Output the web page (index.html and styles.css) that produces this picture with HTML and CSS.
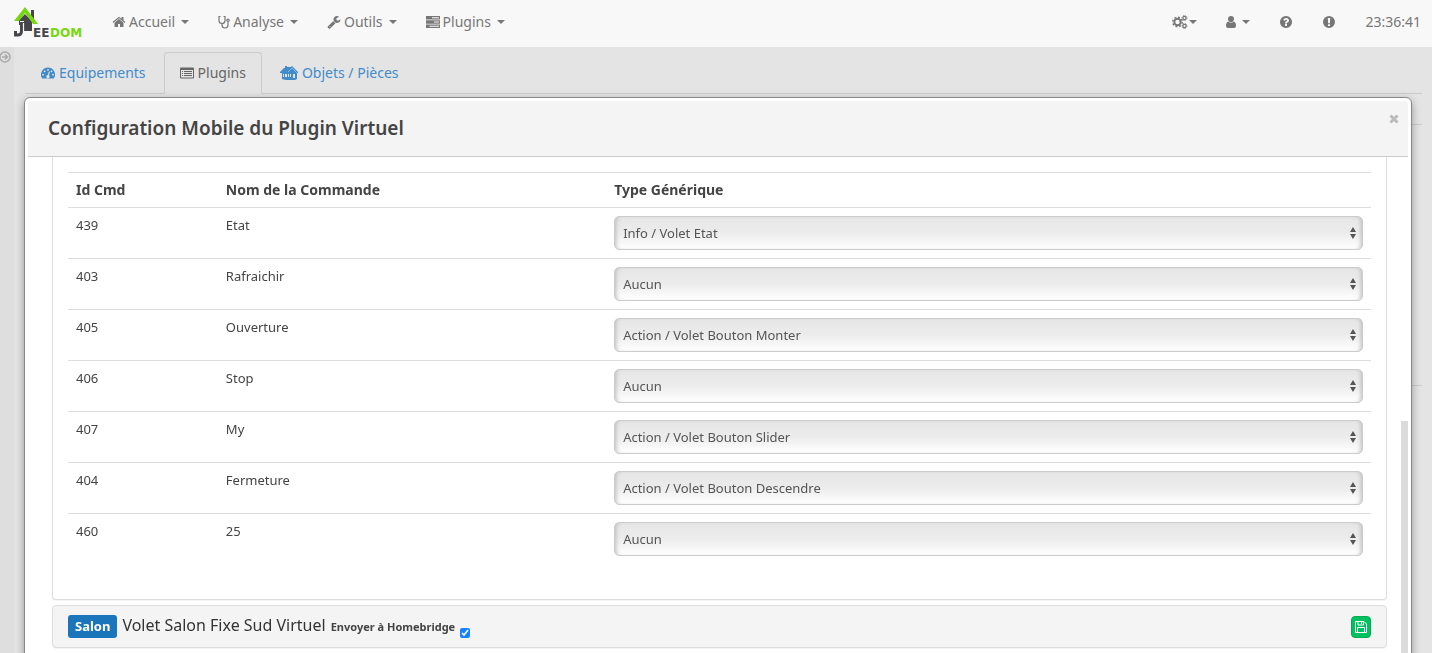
FILE: index.html
```html
<!DOCTYPE html>
<html lang="fr">
<head>
<meta charset="utf-8">
<title>Jeedom</title>
<link rel="stylesheet" href="styles.css">
</head>
<body>
<svg class="defs" aria-hidden="true">
  <symbol id="caret" viewBox="0 0 8 4"><path d="M0 0h8L4 4z"/></symbol>
  <symbol id="updown" viewBox="0 0 6 12"><path d="M0 5l3-5 3 5zM0 7h6l-3 5z"/></symbol>
</svg>

<header class="navbar">
  <a class="brand" href="#" aria-label="Jeedom">
    <svg class="logo" viewBox="0 0 70 32" aria-hidden="true">
      <path fill="#45454b" d="M17 4h3v12h-3zM5 14l6-6 7 7v10H9v-6H5z"/>
      <path fill="#77d70f" d="M0 15L11 1l13 17h-5L11 7 5 15z"/>
      <path fill="none" stroke="#45454b" stroke-width="3" d="M7.500 16v9q0 4-4 4H1.500v-4"/>
      <path fill="none" stroke="#f8f8f8" stroke-width="1.200" d="M9.500 17v8M6 15.500h4"/>
      <text class="logo-text" x="19" y="31" fill="#45454b">EE</text>
      <text class="logo-text" x="36" y="31" fill="#77d70f">DOM</text>
    </svg>
  </a>
  <nav class="menu">
    <a href="#"><svg class="icon" viewBox="0 0 1792 1792"><path d="M1472 992v480q0 26-19 45t-45 19h-384v-384h-256v384h-384q-26 0-45-19t-19-45v-480q0-1 .5-3t.5-3l575-474 575 474q1 2 1 6zm223-69l-62 74q-8 9-21 11h-3q-13 0-21-7l-692-577-692 577q-12 8-24 7-13-2-21-11l-62-74q-8-10-7-23.500t11-21.500l719-599q32-26 76-26t76 26l244 204v-195q0-14 9-23t23-9h192q14 0 23 9t9 23v408l219 182q10 8 11 21.500t-7 23.500z"/></svg>Accueil<svg class="caret"><use href="#caret"/></svg></a>
    <a href="#"><svg class="icon narrow line" viewBox="0 0 12 14"><path d="M2.500 1.500H1v4q0 3 3 3t3-3v-4H5.500M4 8.500V10q0 3 3 3t3-3V6.500"/><circle cx="10" cy="5.300" r="1.200"/></svg>Analyse<svg class="caret"><use href="#caret"/></svg></a>
    <a href="#"><svg class="icon" viewBox="0 0 1792 1792"><path d="M448 1472q0-26-19-45t-45-19-45 19-19 45 19 45 45 19 45-19 19-45zm644-420l-682 682q-37 37-90 37-52 0-91-37l-106-108q-38-36-38-90 0-53 38-91l681-681q39 98 114.500 173.500t173.500 114.500zm634-435q0 39-23 106-47 134-164.500 217.500t-258.500 83.500q-185 0-316.500-131.500t-131.500-316.500 131.500-316.500 316.500-131.500q58 0 121.500 16.500t107.500 46.500q16 11 16 28t-16 28l-293 169v224l193 107q5-3 79-48.500t135.500-81 70.500-35.500q15 0 23.500 10t8.500 25z"/></svg>Outils<svg class="caret"><use href="#caret"/></svg></a>
    <a href="#"><svg class="icon" viewBox="0 0 14 14"><path fill-rule="evenodd" d="M0 1h14v3.400H0zM0 5.300h14v3.400H0zM0 9.600h14V13H0zM6 2.200v1h7v-1zM8 6.500v1h5v-1zM3.500 10.800v1H13v-1z"/></svg>Plugins<svg class="caret"><use href="#caret"/></svg></a>
  </nav>
  <nav class="tools">
    <a href="#" aria-label="Réglages"><svg class="icon cogs" viewBox="0 0 16 14"><g fill="none" stroke="currentColor"><circle cx="5.500" cy="7" r="3.200" stroke-width="2"/><circle cx="5.500" cy="7" r="4.800" stroke-width="1.400" stroke-dasharray="1.900 1.870"/><circle cx="12.500" cy="3" r="1.600" stroke-width="1.200"/><circle cx="12.500" cy="3" r="2.500" stroke-dasharray="1 .96"/><circle cx="12.500" cy="11" r="1.600" stroke-width="1.200"/><circle cx="12.500" cy="11" r="2.500" stroke-dasharray="1 .96"/></g></svg><svg class="caret"><use href="#caret"/></svg></a>
    <a href="#" aria-label="Profil"><svg class="icon user" viewBox="0 0 10 12"><path d="M5 0a3 3 0 0 1 3 3c0 1.700-1.300 3.200-3 3.200S2 4.700 2 3a3 3 0 0 1 3-3zM2.300 5.500Q5 8 7.700 5.500 10 6 10 10q0 2-2 2H2q-2 0-2-2 0-4 2.300-4.500z"/></svg><svg class="caret"><use href="#caret"/></svg></a>
    <a href="#" aria-label="Aide"><svg class="icon" viewBox="0 0 1792 1792"><path d="M1024 1376v-192q0-14-9-23t-23-9h-192q-14 0-23 9t-9 23v192q0 14 9 23t23 9h192q14 0 23-9t9-23zm256-672q0-88-55.500-163t-138.500-116-170-41q-243 0-371 213-15 24 8 42l132 100q7 6 19 6 16 0 25-12 53-68 86-92 34-24 86-24 48 0 85.500 26t37.500 59q0 38-20 61t-68 45q-63 28-115.500 86.500t-52.500 125.500v36q0 14 9 23t23 9h192q14 0 23-9t9-23q0-19 21.500-49.500t54.500-49.500q32-18 49-28.500t46-35 44.500-48 28-60.500 12.500-81zm384 192q0 209-103 385.500t-279.500 279.500-385.500 103-385.500-103-279.500-279.500-103-385.500 103-385.500 279.500-279.500 385.500-103 385.500 103 279.500 279.500 103 385.500z"/></svg></a>
    <a href="#" aria-label="Informations"><svg class="icon" viewBox="0 0 14 14"><path fill-rule="evenodd" d="M7 1a6 6 0 1 1 0 12A6 6 0 0 1 7 1zM5.800 3l.3 5.200h1.800L8.200 3zM6 9.200V11h2V9.200z"/></svg></a>
    <span class="clock">23:36:41</span>
  </nav>
</header>

<div class="page">
  <aside class="rail">
    <button class="rail-toggle" aria-label="Ouvrir le menu"><svg viewBox="0 0 12 12"><circle cx="6" cy="6" r="5"/><path d="M3 6h5M6 3.500L8.500 6 6 8.500"/></svg></button>
  </aside>
  <main class="content">
    <nav class="tabs">
      <a href="#"><svg class="icon" viewBox="0 0 14 14"><path fill-rule="evenodd" d="M7 1.500a7 7 0 0 1 5.900 10.800q-.2.200-.5.200H1.600q-.3 0-.5-.2A7 7 0 0 1 7 1.500zM7 3a.9.900 0 1 0 0 1.800A.9.900 0 0 0 7 3zM3.600 4.400a.9.900 0 1 0 0 1.800.9.900 0 0 0 0-1.800zM2 7.800a.9.900 0 1 0 0 1.800.9.900 0 0 0 0-1.800zM12 7.800a.9.900 0 1 0 0 1.800.9.900 0 0 0 0-1.800zM10.500 4.400a.9.900 0 1 0 0 1.800.9.900 0 0 0 0-1.800zM8 5.500L6.800 9A1.600 1.600 0 1 0 7.900 9.300L9 5.800z"/></svg>Equipements</a>
      <a class="active" href="#"><svg class="icon" viewBox="0 0 14 14"><path fill-rule="evenodd" d="M1 1.500h12q1 0 1 1v9q0 1-1 1H1q-1 0-1-1v-9q0-1 1-1zM1 4v7.500h12V4zM2 5h1v1H2zM4 5h8v1H4zM2 7h1v1H2zM4 7h8v1H4zM2 9h1v1H2zM4 9h8v1H4z"/></svg>Plugins</a>
      <a href="#"><svg class="icon house" viewBox="0 0 18 14"><path d="M0 6l4-4h1V0h2v1h4l1-1 6 6v1h-1v6l-2 1H6l-4-1V7H0z"/><path fill="#e4e4e4" d="M3 8h1v3H3zM5 8h2v3H5zM8 8h1v3H8zM10 8h1v3h-1zM13 8h2v4h-2z"/><path fill="none" stroke="#e4e4e4" stroke-width=".5" d="M8 6l4-4 5 5"/></svg>Objets / Pièces</a>
    </nav>
    <div class="section"></div>
    <div class="section tall"></div>
  </main>
</div>

<div class="modal" role="dialog" aria-labelledby="modal-title">
  <div class="modal-head">
    <h1 id="modal-title">Configuration Mobile du Plugin Virtuel</h1>
    <button class="close" aria-label="Fermer"><svg viewBox="0 0 10 10"><path d="M1.500 1.500l7 7M8.500 1.500l-7 7"/></svg></button>
  </div>
  <div class="modal-body">
    <section class="panel open">
      <table>
        <thead><tr><th class="col-id">Id Cmd</th><th class="col-name">Nom de la Commande</th><th>Type Générique</th></tr></thead>
        <tbody>
          <tr><td>439</td><td>Etat</td><td><div class="pick"><select aria-label="Type générique Etat"><option>Info / Volet Etat</option></select><svg><use href="#updown"/></svg></div></td></tr>
          <tr><td>403</td><td>Rafraichir</td><td><div class="pick"><select aria-label="Type générique Rafraichir"><option>Aucun</option></select><svg><use href="#updown"/></svg></div></td></tr>
          <tr><td>405</td><td>Ouverture</td><td><div class="pick"><select aria-label="Type générique Ouverture"><option>Action / Volet Bouton Monter</option></select><svg><use href="#updown"/></svg></div></td></tr>
          <tr><td>406</td><td>Stop</td><td><div class="pick"><select aria-label="Type générique Stop"><option>Aucun</option></select><svg><use href="#updown"/></svg></div></td></tr>
          <tr><td>407</td><td>My</td><td><div class="pick"><select aria-label="Type générique My"><option>Action / Volet Bouton Slider</option></select><svg><use href="#updown"/></svg></div></td></tr>
          <tr><td>404</td><td>Fermeture</td><td><div class="pick"><select aria-label="Type générique Fermeture"><option>Action / Volet Bouton Descendre</option></select><svg><use href="#updown"/></svg></div></td></tr>
          <tr><td>460</td><td>25</td><td><div class="pick"><select aria-label="Type générique 25"><option>Aucun</option></select><svg><use href="#updown"/></svg></div></td></tr>
        </tbody>
      </table>
    </section>
    <section class="panel item">
      <span class="room">Salon</span>
      <a class="item-name" href="#">Volet Salon Fixe Sud Virtuel</a>
      <label class="send" for="send">Envoyer à Homebridge</label>
      <input id="send" type="checkbox" checked>
      <button class="save" aria-label="Sauvegarder"><svg viewBox="0 0 12 12"><path d="M.5.500h8.500l2.500 2.500v8.500H.5zM3 .5v3.500h5.500V.5M6.500 1v2M2.500 11.500v-5h7v5"/></svg></button>
    </section>
  </div>
  <div class="scroll-thumb"></div>
</div>
</body>
</html>
```

FILE: styles.css
```css
* { box-sizing: border-box; }
html, body { height: 100%; }
body {
  margin: 0;
  overflow: hidden;
  display: flex;
  flex-direction: column;
  background: #e4e4e4;
  color: #333;
  font: 14px/20px "Noto Sans", "Open Sans", sans-serif;
}
a { color: inherit; text-decoration: none; }
button { padding: 0; border: 0; background: none; display: block; }
svg { display: block; flex: none; fill: currentColor; }
.defs { position: absolute; width: 0; height: 0; }
.icon { width: 14px; height: 14px; margin-right: 3px; }
.icon.narrow { width: 12px; }
.line { fill: none; stroke: currentColor; stroke-width: 1.2; }
.caret { width: 8px; height: 4px; margin-left: 6px; }

.navbar {
  flex: none;
  display: flex;
  align-items: center;
  justify-content: space-between;
  height: 47px;
  padding: 0 11px 3px 14px;
  background: #f8f8f8;
  color: #777;
}
.logo { width: 70px; height: 32px; overflow: visible; }
.logo-text { font: bold 12px "DejaVu Sans", sans-serif; }
.menu { display: flex; gap: 29px; margin: 0 auto 0 28px; }
.menu a, .tools a { display: flex; align-items: center; }
.tools { display: flex; align-items: center; gap: 29px; }
.tools .icon { margin: 0; }
.tools .cogs { width: 16px; }
.tools .user { width: 10px; height: 12px; }
.tools .cogs + .caret { margin-left: 1px; }

.page { flex: 1; display: flex; min-height: 0; }
.rail { width: 14px; background: #dedede; }
.rail-toggle { margin: 4px 0 0 -1px; color: #aaa; }
.rail-toggle svg { width: 12px; height: 12px; fill: none; stroke: currentColor; stroke-width: 1.5; }
.content { flex: 1; padding: 5px 10px 0 11px; }
.tabs { display: flex; height: 42px; border-bottom: 1px solid #ccc; color: #428bca; }
.tabs a {
  display: flex;
  align-items: center;
  height: 42px;
  padding: 0 15px;
  margin-right: 2px;
  border: 1px solid transparent;
}
.tabs .active {
  color: #666;
  background: #e4e4e4;
  border-color: #ccc #ccc #e4e4e4;
  border-radius: 4px 4px 0 0;
}
.tabs .icon { margin-right: 4px; }
.tabs .house { width: 18px; }
.section { height: 31px; border-bottom: 1px solid #ccc; }
.section.tall { height: 261px; }

.modal {
  position: fixed;
  top: 97px;
  right: 20px;
  bottom: -10px;
  left: 24px;
  display: flex;
  flex-direction: column;
  padding: 3px;
  overflow: hidden;
  background: #fff;
  border: 1px solid #888;
  border-radius: 6px;
  box-shadow: 0 3px 9px rgba(0, 0, 0, .35);
}
.modal-head {
  flex: none;
  display: flex;
  justify-content: space-between;
  align-items: flex-start;
  padding: 13px 9px 14px 20px;
  background: #f4f4f4;
  border-bottom: 1px solid #ccc;
  border-radius: 4px 4px 0 0;
}
.modal-head h1 {
  margin: 0;
  color: #444;
  font-size: 19px;
  line-height: 28px;
  font-weight: 600;
}
.close { color: #bbb; }
.close svg { width: 10px; height: 10px; stroke: currentColor; stroke-width: 3; }
.modal-body { padding: 0 21px 0 24px; font-size: 13px; }
.panel { border: 1px solid #ddd; border-radius: 4px; box-shadow: 0 1px 1px rgba(0, 0, 0, .05); }
.panel.open {
  padding: 15px 15px 35px;
  border-top: 0;
  border-radius: 0 0 4px 4px;
}
table { width: 100%; table-layout: fixed; border-collapse: collapse; color: #444; }
th, td { padding: 8px; text-align: left; vertical-align: top; border-top: 1px solid #ddd; line-height: 18px; }
th { font-size: 14px; font-weight: bold; }
.col-id { width: 11.5%; }
.col-name { width: 29.8%; }
.pick { position: relative; }
.pick select {
  appearance: none;
  display: block;
  width: 100%;
  height: 34px;
  padding: 0 24px 0 8px;
  color: #555;
  font: inherit;
  background: linear-gradient(#e6e6e6, #ececec 50%, #fff);
  border: 1px solid #ccc;
  border-radius: 5px;
  box-shadow: inset 4px 0 4px -3px #bbb, inset -4px 0 4px -3px #bbb;
}
.pick svg { position: absolute; top: 11px; right: 7px; width: 6px; height: 12px; color: #555; }
.item {
  display: flex;
  align-items: center;
  gap: 5px;
  height: 43px;
  margin-top: 5px;
  padding: 0 15px;
  background: #f4f4f4;
}
.room {
  padding: 0 7px;
  color: #fff;
  background: #1b75bb;
  border-radius: 3px;
  font-weight: bold;
  font-size: 13px;
  line-height: 23px;
}
.item-name { font-size: 16px; padding-bottom: 4px; }
.send { color: #444; font-size: 11px; font-weight: bold; }
.item input { width: 10px; height: 10px; margin: 12px 0 0; accent-color: #1683fb; }
.save {
  display: grid;
  place-items: center;
  width: 20px;
  height: 22px;
  margin-left: auto;
  color: #fff;
  background: #00c160;
  border: 1px solid #00ad50;
  border-radius: 4px;
}
.save svg { width: 12px; height: 12px; fill: none; stroke: currentColor; }
.scroll-thumb { position: absolute; top: 323px; right: 3px; bottom: 0; width: 7px; background: #dbdbdb; }
```
